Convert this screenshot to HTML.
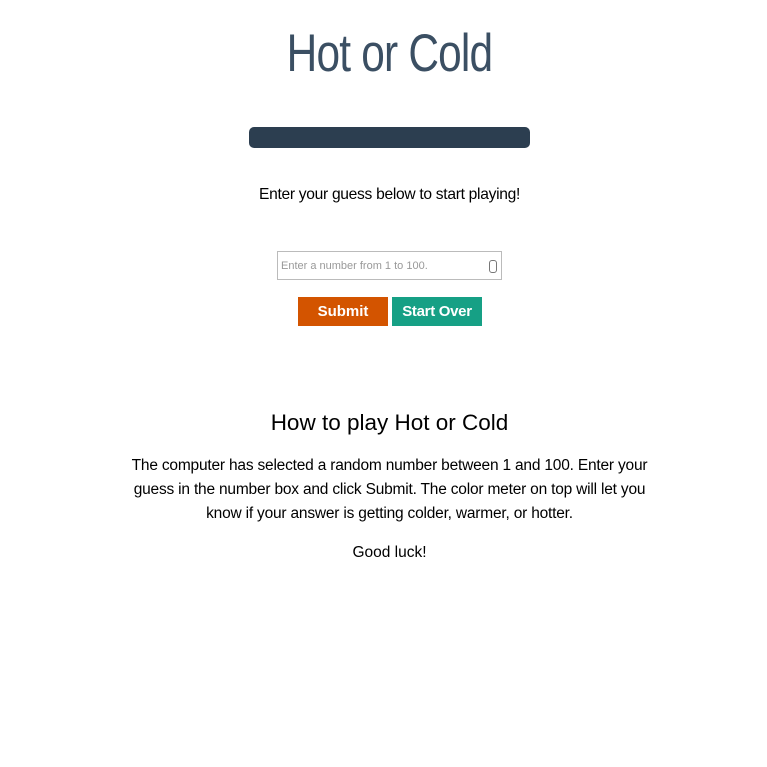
<!DOCTYPE html>
<html><head><style>
body{margin:0;width:767px;height:767px;background:#fff;font-family:"Liberation Sans",sans-serif;color:#000;position:relative;overflow:hidden}
.a{position:absolute;left:6px;width:767px;text-align:center;white-space:nowrap}
h1{margin:0;font-weight:normal;font-size:53px;color:#3b4f63;transform:scaleX(0.8);letter-spacing:-1px}
</style></head><body>
<div class="a" style="top:23px"><h1>Hot or Cold</h1></div>
<div style="position:absolute;left:249px;top:127px;width:281px;height:21px;background:#2c3e50;border-radius:5px"></div>
<div class="a" style="top:186px;font-size:15.6px;letter-spacing:-0.3px">Enter your guess below to start playing!</div>
<div style="position:absolute;left:277px;top:251px;width:225px;height:29px;border:1px solid #bbb;box-sizing:border-box;font-size:11px;color:#999;line-height:29px;padding-left:3px">Enter a number from 1 to 100.
<div style="position:absolute;right:4px;top:8px;width:6px;height:11px;border:1px solid #777;border-radius:3px"></div></div>
<div style="position:absolute;left:298px;top:297px;width:90px;height:29px;background:#d35400;color:#fff;font-weight:bold;font-size:15px;text-align:center;line-height:29px">Submit</div>
<div style="position:absolute;left:392px;top:297px;width:90px;height:29px;background:#16a085;color:#fff;font-weight:bold;font-size:15px;text-align:center;line-height:29px;letter-spacing:-0.3px">Start Over</div>
<div class="a" style="top:410px;font-size:22.5px">How to play Hot or Cold</div>
<div class="a" style="top:454px;font-size:15.5px;line-height:24px;letter-spacing:-0.2px">The computer has selected a random number between 1 and 100. Enter your<br>guess in the number box and click Submit. The color meter on top will let you<br>know if your answer is getting colder, warmer, or hotter.</div>
<div class="a" style="top:544px;font-size:15.5px">Good luck!</div>
</body></html>
